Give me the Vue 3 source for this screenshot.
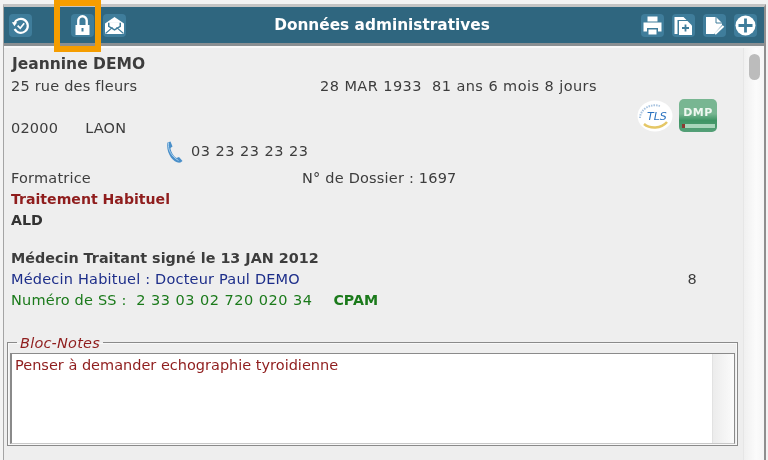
<script setup>
</script>

<template>
  <div class="page">
    <div class="window">
      <header class="bar">
        <div class="tools tools-left">
          <span class="tool t-history">
            <svg viewBox="0 0 23 23" width="23" height="23"><path d="M5.200 9.500a7 7 0 1 1 .4 5.600" fill="none" stroke="#fff" stroke-width="2.200"/><path d="M2.800 8.200h5.400l-2.700 4z" fill="#fff"/><path d="M8.600 11.600l2.600 2.600 4-5" fill="none" stroke="#fff" stroke-width="1.700"/></svg>
          </span>
          <span class="tool t-lock">
            <svg viewBox="0 0 23 23" width="23" height="23"><path d="M7.300 12V6.500a4.200 4.200 0 0 1 8.400 0V12" fill="none" stroke="#fff" stroke-width="2.400"/><path d="M4.500 11h14v10h-14z" fill="#fff"/><rect x="10.500" y="14" width="2" height="3.500" fill="#3f7d9b"/></svg>
          </span>
          <span class="tool t-mail">
            <svg viewBox="0 0 23 23" width="23" height="23"><path d="M2 9.500L11.500 3l9.500 6.500v10.500h-19z" fill="#fff"/><path d="M5 8.800h13v4l-6.500 4-6.500-4z" fill="#3f7d9b"/><path d="M6.500 8.300h10v3.700l-5 3.100-5-3.100z" fill="#fff"/><path d="M2.500 19.500l7-6.200M20.500 19.500l-7-6.200" stroke="#3f7d9b" stroke-width="1.100"/></svg>
          </span>
        </div>
        <h1 class="title">Données administratives</h1>
        <div class="tools tools-right">
          <span class="tool">
            <svg viewBox="0 0 23 23" width="23" height="23"><path d="M6.500 2.500h10v5h-10z" fill="#fff"/><path d="M2.500 8.500h18v9h-3.500v-3.500h-11v3.500h-3.500z" fill="#fff"/><path d="M7.500 15.500h8v5h-8z" fill="#fff"/></svg>
          </span>
          <span class="tool">
            <svg viewBox="0 0 23 23" width="23" height="23"><path d="M2.500 3h9l3 3h-9v14h-3z" fill="#fff"/><path d="M7 7h8.500l4.500 4.500v9.500h-13z" fill="#fff"/><path d="M13.500 10.500v7M10 14h7" stroke="#3f7d9b" stroke-width="1.800"/></svg>
          </span>
          <span class="tool">
            <svg viewBox="0 0 23 23" width="23" height="23"><path d="M3 3h10l6 6v2l-8 9H3z" fill="#fff"/><path d="M13 3v6h6" fill="none" stroke="#3f7d9b" stroke-width="1"/><path d="M12 20l8.500-8" stroke="#fff" stroke-width="2.200"/></svg>
          </span>
          <span class="tool">
            <svg viewBox="0 0 23 23" width="23" height="23"><circle cx="11.500" cy="11.500" r="10" fill="#fff"/><path d="M11.500 4.500v14M4.500 11.500h14" stroke="#3f7d9b" stroke-width="2.800"/></svg>
          </span>
        </div>
      </header>

      <div class="body">
        <main class="content">
          <div class="row name">Jeannine DEMO</div>
          <div class="row split">
            <span class="addr">25 rue des fleurs</span>
            <span class="wide">28 MAR 1933&nbsp;&nbsp;81 ans 6 mois 8 jours</span>
          </div>
          <div class="row city-row">
            <div class="city"><span>02000</span><span>LAON</span></div>
            <div class="logos">
              <svg class="logo-tls" viewBox="0 0 36 32" width="36" height="32">
                <ellipse cx="18" cy="16" rx="17.500" ry="15.500" fill="#fff"/>
                <path d="M3 18a15 13 0 0 1 20-12" fill="none" stroke="#a9c4e0" stroke-width="2" stroke-dasharray="1.500 1"/>
                <path d="M7 24c6 5 17 5 23-2" fill="none" stroke="#e5c766" stroke-width="2.500"/>
                <text x="10" y="20" class="tls-text">TLS</text>
              </svg>
              <span class="logo-dmp">
                <span class="dmp-text">DMP</span>
                <span class="dmp-line"></span>
              </span>
            </div>
          </div>
          <div class="row phone">
            <svg viewBox="0 0 20 22" width="20" height="22"><path d="M3.500 1.500l3-1 2 5-2 1.500c0 3 3 8.500 6 10l2.500-1 3.500 4-2 1.500c-7 1.500-15-10-13-20z" fill="#4a8fc9"/><path d="M4.500 1.500c-1 7 3 14 10 18" fill="none" stroke="#a8d0ee" stroke-width="1"/></svg>
            <span class="digits">03 23 23 23 23</span>
          </div>
          <div class="row split job">
            <span class="job-title">Formatrice</span>
            <span>N° de Dossier : 1697</span>
          </div>
          <div class="row bold red">Traitement Habituel</div>
          <div class="row bold ald">ALD</div>
          <div class="row bold signed">Médecin Traitant signé le 13 JAN 2012</div>
          <div class="row doctor"><span class="blue">Médecin Habituel : Docteur Paul DEMO</span><span>8</span></div>
          <div class="row green">Numéro de SS :&nbsp;&nbsp;<span class="digits">2 33 03 02 720 020 34</span><b class="cpam">CPAM</b></div>

          <fieldset class="notes">
            <legend>Bloc-Notes</legend>
            <div class="notes-box">
              <div class="notes-text">Penser à demander echographie tyroidienne</div>
              <div class="notes-scroll"></div>
            </div>
          </fieldset>
        </main>
        <aside class="scrollbar"><span class="thumb"></span></aside>
      </div>
    </div>
    <div class="highlight"></div>
  </div>
</template>

<style scoped>
.page {
  position: relative;
  width: 768px;
  height: 460px;
  overflow: hidden;
  box-sizing: border-box;
  padding: 4px 2px 0 3px;
  background: #f3f3f3;
  font-family: "DejaVu Sans", sans-serif;
  font-size: 14.500px;
  letter-spacing: 0.200px;
  color: #3d3d3d;
  filter: blur(0.4px);
}
.window {
  height: 456px;
  box-sizing: border-box;
  border: 1px solid #a4a4a4;
  border-top: 3px solid #c4c4c4;
  border-right: 2px solid #8f8f8f;
  border-bottom: 0;
  display: flex;
  flex-direction: column;
}
.bar {
  height: 36px;
  flex: none;
  display: flex;
  align-items: center;
  justify-content: space-between;
  position: relative;
  background: #2f667f;
  border-bottom: 3px solid #8a8f92;
  box-sizing: content-box;
  padding: 0 7px 0 5px;
}
.title {
  position: absolute;
  left: 0;
  right: 4px;
  margin: 0;
  text-align: center;
  color: #fff;
  font-size: 15.350px;
  letter-spacing: 0;
  font-weight: 700;
}
.tools { display: flex; align-items: center; }
.tools-left { gap: 8px; }
.tools-right { gap: 8px; }
.tool {
  width: 23px;
  height: 23px;
  border-radius: 4px;
  background: #3f7d9b;
  display: block;
}
.tool svg { display: block; }
.t-lock { margin-left: 31px; }
.t-mail { margin-left: 1px; }
.body {
  flex: 1;
  display: flex;
  min-height: 0;
  border-top: 2px solid #f8f8f8;
  background: #eeeeee;
}
.content {
  flex: 1;
  min-width: 0;
  padding: 5px 0 0 3px;
}
.row {
  height: 21px;
  line-height: 21px;
  padding-left: 4px;
  white-space: nowrap;
}
.name {
  height: 23px;
  line-height: 23px;
  font-size: 15.500px;
  letter-spacing: 0;
  font-weight: 700;
  padding-left: 5px;
}
.split { display: flex; }
.addr { width: 309px; }
.wide { letter-spacing: 0.440px; }
.digits { letter-spacing: 0.480px; }
.job-title { width: 291px; }
.city-row {
  height: 40px;
  display: flex;
  justify-content: space-between;
  align-items: flex-end;
}
.city { display: flex; gap: 27px; height: 18px; line-height: 18px; }
.logos {
  align-self: flex-start;
  margin-top: 2px;
  display: flex;
  align-items: center;
  gap: 6px;
  padding-right: 26px;
}
.tls-text {
  font-size: 11px;
  font-style: italic;
  fill: #2a72c0;
  letter-spacing: 0;
}
.logo-dmp {
  width: 38px;
  height: 33px;
  border-radius: 5px;
  background: linear-gradient(#78b692 0 45%, #3f9565 65%, #55a078);
  color: #eef7f0;
  font-size: 11px;
  font-weight: 700;
  letter-spacing: 0.500px;
  line-height: 1;
  display: flex;
  flex-direction: column;
  align-items: center;
  padding-top: 8px;
  box-sizing: border-box;
}
.dmp-line {
  width: 33px;
  height: 4px;
  margin-top: 6px;
  background: linear-gradient(90deg, #8a3a32 0 3px, #a8d6bb 3px);
}
.phone {
  display: flex;
  align-items: center;
  gap: 7px;
  padding-left: 157px;
  height: 25px;
  margin-top: 2px;
}
.job { height: 22px; line-height: 22px; margin-top: 3px; }
.bold { font-weight: 700; font-size: 14.200px; letter-spacing: 0; }
.red { color: #8f1d1d; font-size: 14.100px; }
.ald { color: #333; }
.signed { margin-top: 17px; font-size: 14.350px; }
.doctor { display: flex; justify-content: space-between; padding-right: 46px; }
.blue { color: #1d2e8a; }
.green { color: #1b7a1b; }
.cpam { margin-left: 21px; font-size: 14.200px; letter-spacing: 0; }
.notes {
  margin: 21px 0 0 0;
  padding: 0 1px 1px;
  border: 1px solid #8a8a8a;
  box-shadow: inset 0 0 0 1px #f8f8f8;
  width: 731px;
  height: 114px;
  box-sizing: border-box;
}
.notes legend {
  margin-left: 8px;
  padding: 2px 3px 0;
  font-style: italic;
  color: #8f1d1d;
  line-height: 18px;
}
.notes-box {
  display: flex;
  height: 91px;
  margin: 1px 1px 0;
  background: #fff;
  border: 1px solid #8a8a8a;
  border-bottom-color: #c8c8c8;
  border-left-width: 2px;
  box-sizing: border-box;
}
.notes-text {
  flex: 1;
  padding: 2px 0 0 3px;
  line-height: 18px;
  letter-spacing: 0;
  color: #8f1d1d;
}
.notes-scroll {
  width: 21px;
  background: linear-gradient(90deg, #ececec, #fbfbfb);
  border-left: 1px solid #e2e2e2;
}
.scrollbar {
  width: 20px;
  flex: none;
  background: linear-gradient(90deg, #f0f0f0, #fbfbfb 60%, #f6f6f6);
  border-left: 1px solid #e6e6e6;
  display: flex;
  justify-content: center;
  align-items: flex-start;
  padding-top: 6px;
}
.thumb {
  width: 11px;
  height: 26px;
  border-radius: 6px;
  background: #bcbcbc;
  display: block;
}
.highlight {
  position: absolute;
  left: 54px;
  top: 0;
  width: 47px;
  height: 52px;
  box-sizing: border-box;
  border: 6px solid #f59d00;
}
</style>
